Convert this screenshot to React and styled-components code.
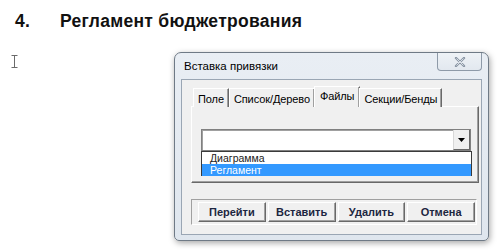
import React from 'react';
import styled, { createGlobalStyle } from 'styled-components';

const GlobalStyle = createGlobalStyle`
  html, body {
    margin: 0;
    padding: 0;
    background: #ffffff;
  }
  body {
    font-family: 'Liberation Sans', Arial, sans-serif;
  }
`;

const Page = styled.div`
  width: 500px;
  height: 251px;
  overflow: hidden;
  display: flex;
  flex-direction: column;
`;

const Heading = styled.h1`
  display: flex;
  margin: 0;
  padding: 11px 0 0 15px;
  font-size: 17.5px;
  letter-spacing: 0.3px;
  line-height: 20px;
  font-weight: bold;
  color: #111;
`;

const Num = styled.span`
  width: 45px;
`;

const Body = styled.div`
  display: flex;
  align-items: flex-start;
  margin-top: 21px;
`;

const Cursor = styled.svg`
  margin: 3px 0 0 11px;
  flex-shrink: 0;
`;

const Dialog = styled.div`
  margin-left: 156px;
  width: 315px;
  height: 189px;
  box-sizing: border-box;
  border: 1px solid #6f7a86;
  border-radius: 7px 7px 5px 5px;
  background: linear-gradient(#e9eef4, #dfe6ee);
  box-shadow: 1px 2px 6px rgba(0, 0, 0, 0.35);
  padding: 0 6px 5px 6px;
  display: flex;
  flex-direction: column;
`;

const TitleBar = styled.div`
  height: 26px;
  display: flex;
  align-items: center;
`;

const Title = styled.span`
  margin-left: 3px;
  font-size: 11.5px;
  color: #000;
`;

const CloseButton = styled.div`
  margin-left: auto;
  align-self: flex-start;
  width: 45px;
  height: 18px;
  box-sizing: border-box;
  border: 1px solid #8e9aa8;
  border-top: none;
  border-radius: 0 0 4px 4px;
  background: linear-gradient(#eef2f6, #e2e8ef);
  display: flex;
  align-items: center;
  justify-content: center;
`;

const Client = styled.div`
  flex: 1;
  background: #f0f0f0;
  border: 1px solid #9aa6b4;
  padding: 6px 2px 9px 9px;
  display: flex;
  flex-direction: column;
  font-size: 11px;
  color: #000;
`;

const TabRow = styled.div`
  display: flex;
  align-items: flex-end;
  height: 21px;
  padding-left: 2px;
  margin-bottom: -1px;
  position: relative;
  z-index: 1;
`;

const Tab = styled.div`
  height: ${(p) => (p.$active ? 21 : 19)}px;
  box-sizing: border-box;
  padding: ${(p) => (p.$active ? '2px 5px 0' : '3px 4px 0')};
  margin: ${(p) => (p.$active ? '0 -1px' : '0')};
  background: #f0f0f0;
  border-top: 1px solid #ffffff;
  border-left: 1px solid #ffffff;
  border-right: 1px solid #696969;
  box-shadow: inset -1px 0 #a0a0a0;
  line-height: 14px;
  letter-spacing: -0.1px;
  white-space: nowrap;
`;

const Panel = styled.div`
  width: 288px;
  height: 77px;
  box-sizing: border-box;
  border-top: 1px solid #ffffff;
  border-left: 1px solid #ffffff;
  border-right: 1px solid #696969;
  border-bottom: 1px solid #696969;
  box-shadow: inset -1px -1px #a0a0a0;
  padding: 22px 6px 0 9px;
`;

const Combo = styled.div`
  height: 22px;
  box-sizing: border-box;
  background: #ffffff;
  border: 1px solid #808080;
  box-shadow: inset 1px 1px #a0a0a0;
  display: flex;
  justify-content: flex-end;
  margin-right: 1px;
`;

const DropButton = styled.div`
  width: 17px;
  box-sizing: border-box;
  background: #f0f0f0;
  border-left: 1px solid #d8d8d8;
  border-right: 1px solid #696969;
  border-bottom: 1px solid #696969;
  display: flex;
  align-items: center;
  justify-content: center;
`;

const List = styled.div`
  height: 25px;
  box-sizing: border-box;
  background: #ffffff;
  border: 1px solid #3a3a3a;
  display: flex;
  flex-direction: column;
`;

const Item = styled.div`
  height: 12px;
  line-height: 12px;
  font-size: 10.5px;
  padding-left: 8px;
  background: ${(p) => (p.$selected ? '#3399ff' : 'transparent')};
  color: ${(p) => (p.$selected ? '#ffffff' : '#222')};
`;

const ButtonGroup = styled.div`
  margin-top: 16px;
  width: 286px;
  height: 26px;
  box-sizing: border-box;
  border-top: 1px solid #a0a0a0;
  border-left: 1px solid #a0a0a0;
  border-right: 1px solid #ffffff;
  border-bottom: 1px solid #ffffff;
  padding: 2px 1px 0 6px;
  display: flex;
  gap: 2px;
`;

const Button = styled.div`
  width: 68px;
  height: 20px;
  box-sizing: border-box;
  background: #f0f0f0;
  border-top: 1px solid #ffffff;
  border-left: 1px solid #ffffff;
  border-right: 1px solid #696969;
  border-bottom: 1px solid #696969;
  box-shadow: inset -1px -1px #a0a0a0;
  display: flex;
  align-items: center;
  justify-content: center;
  font-weight: bold;
  font-size: 11px;
  color: #1c2640;
`;

const tabs = ['Поле', 'Список/Дерево', 'Файлы', 'Секции/Бенды'];
const buttons = ['Перейти', 'Вставить', 'Удалить', 'Отмена'];

export default function App() {
  return (
    <Page>
      <GlobalStyle />
      <Heading>
        <Num>4.</Num>
        <span>Регламент бюджетрования</span>
      </Heading>
      <Body>
        <Cursor width="7" height="13" viewBox="0 0 7 13">
          <path d="M0.5 0.5h6M3.5 0.5v12M0.5 12.5h6" stroke="#6b6b6b" strokeWidth="1" fill="none" />
        </Cursor>
        <Dialog>
          <TitleBar>
            <Title>Вставка привязки</Title>
            <CloseButton>
              <svg width="12" height="10" viewBox="0 0 12 10">
                <path
                  d="M2 1 L10 9 M10 1 L2 9"
                  stroke="#8894a3"
                  strokeWidth="2.4"
                  strokeLinecap="round"
                  fill="none"
                />
                <path d="M2.5 1.5 L9.5 8.5 M9.5 1.5 L2.5 8.5" stroke="#eef2f6" strokeWidth="0.8" fill="none" />
              </svg>
            </CloseButton>
          </TitleBar>
          <Client>
            <TabRow>
              {tabs.map((t) => (
                <Tab key={t} $active={t === 'Файлы'}>
                  {t}
                </Tab>
              ))}
            </TabRow>
            <Panel>
              <Combo>
                <DropButton>
                  <svg width="7" height="4" viewBox="0 0 7 4">
                    <path d="M0 0h7L3.5 4z" fill="#000" />
                  </svg>
                </DropButton>
              </Combo>
              <List>
                <Item>Диаграмма</Item>
                <Item $selected>Регламент</Item>
              </List>
            </Panel>
            <ButtonGroup>
              {buttons.map((b) => (
                <Button key={b}>{b}</Button>
              ))}
            </ButtonGroup>
          </Client>
        </Dialog>
      </Body>
    </Page>
  );
}
